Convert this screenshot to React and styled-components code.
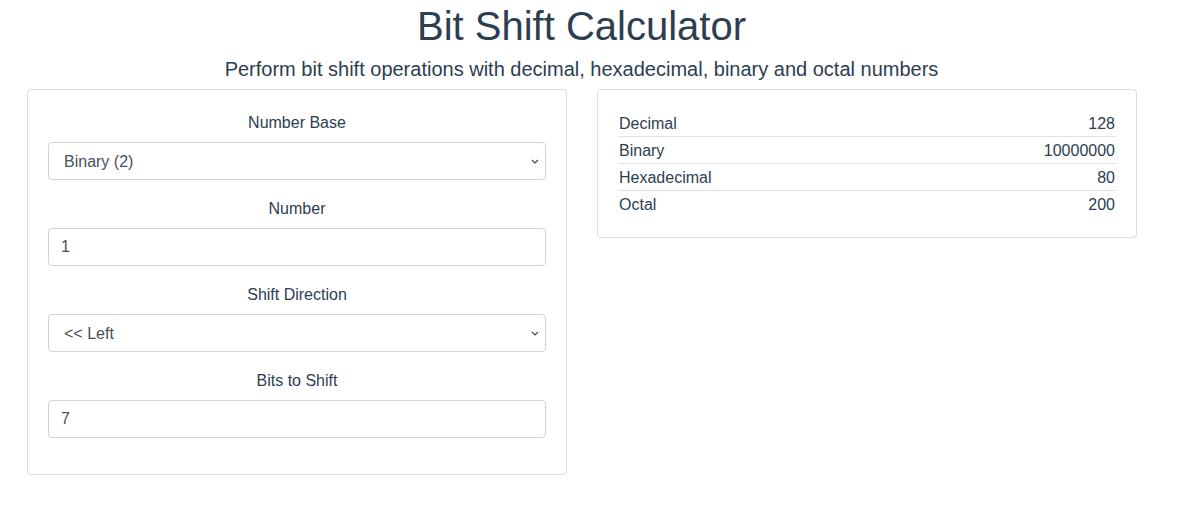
import styled, { createGlobalStyle } from "styled-components"
import { useState } from "react"

const GlobalStyle = createGlobalStyle`
  body {
    margin: 0;
    font-family: "Liberation Sans", Arial, sans-serif;
    color: #2c3e50;
    background: #fff;
  }
  * { box-sizing: border-box; }
`

const bases = [
  { label: "Decimal (10)", radix: 10 },
  { label: "Binary (2)", radix: 2 },
  { label: "Hexadecimal (16)", radix: 16 },
  { label: "Octal (8)", radix: 8 },
]

// small thin chevron used as the select arrow
const chevron =
  "url(\"data:image/svg+xml,%3Csvg xmlns='http://www.w3.org/2000/svg' width='8' height='5' viewBox='0 0 8 5'%3E%3Cpath d='M1 1l3 3 3-3' fill='none' stroke='%23444' stroke-width='1.2'/%3E%3C/svg%3E\")"

function App() {
  const [radix, setRadix] = useState(2)
  const [number, setNumber] = useState("1")
  const [direction, setDirection] = useState("left")
  const [bits, setBits] = useState("7")

  const parsed = parseInt(number, radix) || 0
  const n = parseInt(bits, 10) || 0
  const result = direction === "left" ? parsed << n : parsed >> n

  const rows = [
    ["Decimal", result.toString(10)],
    ["Binary", result.toString(2)],
    ["Hexadecimal", result.toString(16)],
    ["Octal", result.toString(8)],
  ]

  return (
    <Page>
      <GlobalStyle />
      <Title>Bit Shift Calculator</Title>
      <Subtitle>
        Perform bit shift operations with decimal, hexadecimal, binary and octal numbers
      </Subtitle>
      <Columns>
        <Card>
          <Field>
            <Label>Number Base</Label>
            <Select value={radix} onChange={(e) => setRadix(Number(e.target.value))}>
              {bases.map((b) => (
                <option key={b.radix} value={b.radix}>
                  {b.label}
                </option>
              ))}
            </Select>
          </Field>
          <Field>
            <Label>Number</Label>
            <Input value={number} onChange={(e) => setNumber(e.target.value)} />
          </Field>
          <Field>
            <Label>Shift Direction</Label>
            <Select value={direction} onChange={(e) => setDirection(e.target.value)}>
              <option value="left">&lt;&lt; Left</option>
              <option value="right">&gt;&gt; Right</option>
            </Select>
          </Field>
          <Field>
            <Label>Bits to Shift</Label>
            <Input value={bits} onChange={(e) => setBits(e.target.value)} />
          </Field>
        </Card>
        <Card $results>
          <Results>
            <tbody>
              {rows.map(([name, value]) => (
                <tr key={name}>
                  <td>{name}</td>
                  <td>{value}</td>
                </tr>
              ))}
            </tbody>
          </Results>
        </Card>
      </Columns>
    </Page>
  )
}

const Page = styled.div`
  padding: 2px 47px 20px 27px;
  text-align: center;
`

const Title = styled.h1`
  margin: 0 0 8px;
  font-size: 40px;
  font-weight: 400;
  line-height: 1.2;
`

const Subtitle = styled.p`
  margin: 0 0 7px;
  font-size: 20px;
  line-height: 1.2;
  position: relative;
  top: -1px;
`

const Columns = styled.div`
  display: grid;
  grid-template-columns: 540px 540px;
  column-gap: 30px;
  align-items: start;
`

const Card = styled.div`
  border: 1px solid #dcdcdc;
  border-radius: 4px;
  padding: ${(p) => (p.$results ? "20px" : "20px 20px 4px")};
  ${(p) => !p.$results && "padding-bottom: 20px;"}
`

const Field = styled.div`
  margin-bottom: 16px;
`

const Label = styled.label`
  display: block;
  font-size: 16px;
  line-height: 25px;
  margin-bottom: 7px;
`

const controlBase = `
  display: block;
  width: 100%;
  height: 38px;
  padding: 6px 12px;
  font-family: "Liberation Sans", Arial, sans-serif;
  font-size: 16px;
  line-height: 24px;
  color: #495057;
  background-color: #fff;
  border: 1px solid #ced4da;
  border-radius: 4px;
  outline: none;
`

const Select = styled.select`
  ${controlBase}
  appearance: none;
  padding: 7px 28px 5px 15px;
  background-image: ${chevron};
  background-repeat: no-repeat;
  background-position: right 6px center;
  background-size: 8px 5px;
`

const Input = styled.input`
  ${controlBase}
`

const Results = styled.table`
  width: 100%;
  border-collapse: collapse;
  font-size: 16px;

  td {
    padding: 2px 1px 0;
    height: 26px;
    line-height: 24px;
    text-align: left;
  }

  td:last-child {
    text-align: right;
  }

  tr + tr td {
    border-top: 1px solid #dee2e6;
  }
`

export default App
